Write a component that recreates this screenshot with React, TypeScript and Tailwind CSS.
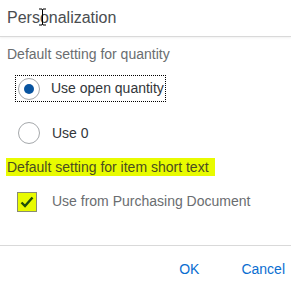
import React from "react";

const font = { fontFamily: '"Liberation Sans", Arial, sans-serif' };

function Radio({ checked }: { checked?: boolean }) {
  return (
    <div className="flex size-[22px] flex-none items-center justify-center rounded-full border border-[#a5a8ab] bg-white">
      {checked && <div className="size-[10px] rounded-full bg-[#0854a0]" />}
    </div>
  );
}

export default function App() {
  return (
    <div
      className="relative flex h-[281px] w-[291px] flex-col overflow-hidden bg-white text-[#32363a]"
      style={font}
    >
      {/* header */}
      <div className="flex h-[37px] flex-none items-center border-b border-[#d9d9d9] pl-[7px] shadow-[0_1px_2px_rgba(0,0,0,0.06)]">
        <span className="text-[16px] text-[#4a4d50]">Personalization</span>
      </div>

      {/* cursor */}
      <svg
        className="absolute left-[38px] top-[8px]"
        width="9"
        height="18"
        viewBox="0 0 9 18"
      >
        <path
          d="M1 1h3l0.5 1 0.5-1h3M4.5 2v14M1 17h3l0.5-1 0.5 1h3"
          stroke="#000"
          strokeWidth="1"
          fill="none"
        />
      </svg>

      <div className="flex flex-1 flex-col pt-[8px]">
        <div className="pl-[7px] text-[14px] leading-[18px] text-[#6a6d70]">
          Default setting for quantity
        </div>

        <div className="mt-[12px] ml-[15px] flex h-[27px] w-[151px] items-center gap-[11px] border border-dotted border-black pl-[2px]">
          <Radio checked />
          <span className="text-[14px] text-[#32363a]">Use open quantity</span>
        </div>

        <div className="mt-[20px] ml-[18px] flex items-center gap-[12px]">
          <Radio />
          <span className="text-[14px] text-[#32363a]">Use 0</span>
        </div>

        <div className="mt-[14px] ml-[6px] w-fit bg-[#e8fb00] pl-[1px] pr-[6px] text-[14px] leading-[18px] text-[#4a4d20]">
          Default setting for item short text
        </div>

        <div className="mt-[15px] ml-[17px] flex items-center gap-[15px]">
          <div className="flex size-[20px] flex-none items-center justify-center border border-[#8a8d70] bg-[#e8fb00]">
            <svg width="14" height="12" viewBox="0 0 14 12">
              <path
                d="M1.5 6.5l3.5 3.5 7.5-8.5"
                stroke="#1e4d0a"
                strokeWidth="2.4"
                fill="none"
              />
            </svg>
          </div>
          <span className="text-[14px] text-[#6a6d70]">
            Use from Purchasing Document
          </span>
        </div>
      </div>

      {/* footer */}
      <div className="flex h-[36px] flex-none items-start justify-end gap-[42px] border-t border-[#d9d9d9] pt-[14px] pr-[6px] text-[14px] leading-[18px] text-[#0a6ed1]">
        <span>OK</span>
        <span>Cancel</span>
      </div>
    </div>
  );
}
